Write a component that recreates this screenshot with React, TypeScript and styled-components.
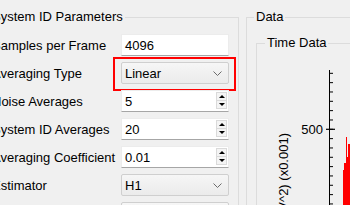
import React from "react";
import styled, { createGlobalStyle } from "styled-components";

const Global = createGlobalStyle`
  html, body { margin: 0; padding: 0; background: #f0f0f0; }
  body { font-family: "Liberation Sans", Arial, sans-serif; font-size: 13px; color: #000; }
`;

const Page = styled.div`
  display: flex;
  align-items: flex-start;
  width: 350px;
  height: 205px;
  overflow: hidden;
  padding-top: 9px;
  box-sizing: border-box;
`;

const Group = styled.fieldset`
  margin: 0;
  border: 1px solid #dcdcdc;
  min-width: 0;
  box-sizing: border-box;
`;

const Legend = styled.legend`
  padding: 0 2px;
  margin-left: -2px;
  line-height: 16px;
  font-size: 13px;
`;

const ParamsGroup = styled(Group)`
  margin-left: -20px;
  width: 259px;
  height: 230px;
  padding: 9px 9px 0 11px;
  flex: none;
`;

const DataGroup = styled(Group)`
  margin-left: 7px;
  width: 200px;
  height: 230px;
  padding: 10px 0 0 9px;
  flex: none;
`;

const TimeGroup = styled(Group)`
  height: 200px;
  padding: 0 0 0 10px;
`;

const Form = styled.div`
  display: grid;
  grid-template-columns: 129px 108px;
  grid-auto-rows: 22px;
  row-gap: 6px;
  align-items: center;
`;

const Label = styled.span`
  white-space: nowrap;
  line-height: 16px;
  padding-top: 1px;
`;

const Field = styled.div`
  position: relative;
  height: 22px;
  box-sizing: border-box;
  display: flex;
  align-items: center;
  padding-left: 3px;
  background: #fff;
  border: 1px solid #ececec;
  border-bottom-color: #a6a6a6;
`;

const Combo = styled(Field)`
  background: linear-gradient(#f6f6f6, #ebebeb);
  border: 1px solid #cfcfcf;
  border-radius: 2px;
  justify-content: space-between;
  padding-right: 6px;
`;

const Highlight = styled.div`
  position: absolute;
  left: -9px;
  right: -8px;
  top: -6px;
  bottom: -8px;
  border: 2px solid #ff0000;
  pointer-events: none;
`;

const Spin = styled.div`
  position: absolute;
  right: 1px;
  top: 1px;
  bottom: 2px;
  width: 11px;
  display: flex;
  flex-direction: column;
`;

const SpinButton = styled.div<{ $down?: boolean }>`
  flex: 1;
  display: flex;
  align-items: center;
  justify-content: center;
  border: 1px solid #dadada;
  background: #f4f4f4;
  &:first-child { border-bottom: none; }
  &::after {
    content: "";
    width: 0;
    height: 0;
    border-left: 3px solid transparent;
    border-right: 3px solid transparent;
    ${(p) => (p.$down ? "border-top: 3px solid #000;" : "border-bottom: 3px solid #000;")}
  }
`;

const Plot = styled.svg`
  display: block;
  margin-left: -10px;
  width: 100px;
  height: 160px;
  overflow: visible;
`;

function Chevron() {
  return (
    <svg width="9" height="5" viewBox="0 0 9 5">
      <polyline points="0.5,0.5 4.5,4.5 8.5,0.5" fill="none" stroke="#6b6b6b" strokeWidth="1" />
    </svg>
  );
}

function SpinField({ value }: { value: string }) {
  return (
    <Field>
      {value}
      <Spin>
        <SpinButton />
        <SpinButton $down />
      </Spin>
    </Field>
  );
}

function TimePlot() {
  const minor: number[] = [];
  for (let i = -6; i <= 8; i++) minor.push(129.3 + i * 9.33);
  return (
    <Plot>
      <g transform="translate(-257,-51)">
        <line x1="329.5" y1="70" x2="329.5" y2="210" stroke="#000" strokeWidth="1" />
        {minor.map((y, i) => (
          <line key={i} x1="329.5" y1={y} x2="333" y2={y} stroke="#000" strokeWidth="1" />
        ))}
        <line x1="326" y1="129.3" x2="335" y2="129.3" stroke="#000" strokeWidth="1.2" />
        <text x="323" y="134" textAnchor="end" fontSize="13" fontFamily="Liberation Sans, Arial, sans-serif" fill="#000">
          500
        </text>
        <text
          transform="translate(288,133) rotate(-90)"
          x="0"
          y="0"
          textAnchor="end"
          fontSize="13"
          fontFamily="Liberation Sans, Arial, sans-serif"
          fill="#000"
        >
          Amplitude (V^2) (x0.001)
        </text>
        <polygon
          points="343,210 343,170 344,170 344,163 346,163 346,137 347,137 347,157 348,157 348,144 351,144 351,210"
          fill="#ff0000"
        />
      </g>
    </Plot>
  );
}

export default function App() {
  return (
    <Page>
      <Global />
      <ParamsGroup>
        <Legend>System ID Parameters</Legend>
        <Form>
          <Label>Samples per Frame</Label>
          <Field>4096</Field>
          <Label>Averaging Type</Label>
          <Combo>
            Linear
            <Chevron />
            <Highlight />
          </Combo>
          <Label>Noise Averages</Label>
          <SpinField value="5" />
          <Label>System ID Averages</Label>
          <SpinField value="20" />
          <Label>Averaging Coefficient</Label>
          <SpinField value="0.01" />
          <Label>Estimator</Label>
          <Combo>
            H1
            <Chevron />
          </Combo>
          <Label>Window</Label>
          <Combo>
            Hann
            <Chevron />
          </Combo>
        </Form>
      </ParamsGroup>
      <DataGroup>
        <Legend>Data</Legend>
        <TimeGroup>
          <Legend>Time Data</Legend>
          <TimePlot />
        </TimeGroup>
      </DataGroup>
    </Page>
  );
}
